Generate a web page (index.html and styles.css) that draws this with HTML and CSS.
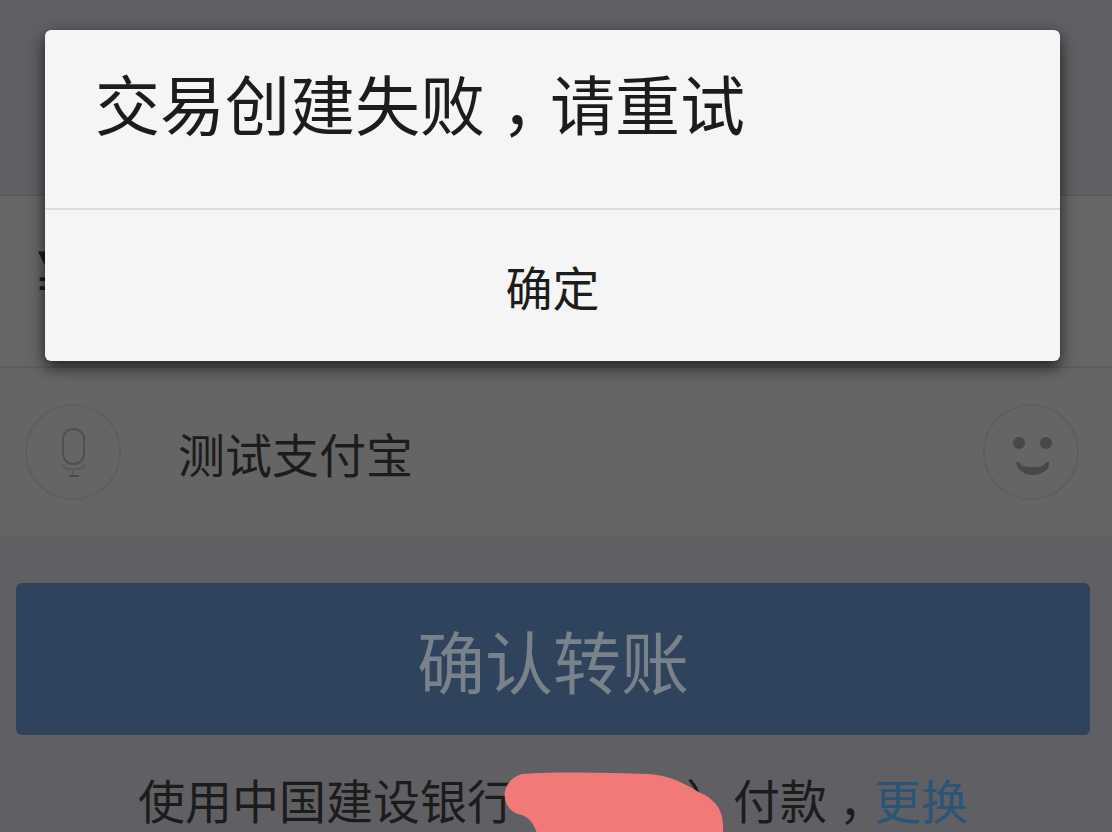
FILE: index.html
```html
<!DOCTYPE html>
<html lang="zh-CN">
<head>
  <meta charset="UTF-8">
  <meta name="viewport" content="width=device-width, initial-scale=1">
  <title>确认转账</title>
  <link rel="stylesheet" href="styles.css">
</head>
<body>
  <main class="page">
    <div class="payee"></div>

    <div class="amount">¥</div>

    <div class="remark">
      <button class="icon-btn" type="button" aria-label="语音">
        <svg width="98" height="98" viewBox="0 0 98 98" fill="none">
          <circle cx="49" cy="49" r="47" stroke="#5e5e5e" stroke-width="2"/>
          <rect x="39" y="26" width="21" height="35" rx="10" stroke="#505050" stroke-width="2"/>
          <path d="M38 62c4 6 19 6 23 0M49 67v5" stroke="#585858" stroke-width="2"/>
          <path d="M45 73h10" stroke="#484848" stroke-width="2"/>
        </svg>
      </button>
      <input class="remark-input" type="text" value="测试支付宝" aria-label="备注">
      <button class="icon-btn" type="button" aria-label="表情">
        <svg width="98" height="98" viewBox="0 0 98 98" fill="none">
          <circle cx="49" cy="49" r="47" stroke="#5e5e5e" stroke-width="2"/>
          <circle cx="37" cy="40" r="6" fill="#484848"/>
          <circle cx="64" cy="40" r="6" fill="#484848"/>
          <path d="M34 59q3-1 5 3c6 3 18 3 23 0q2-4 5-3c0 7-3 9-6 10-3 4-17 4-20 0-4-2-6-5-7-10z" fill="#484848"/>
        </svg>
      </button>
    </div>

    <div class="actions">
      <button class="confirm" type="button">确认转账</button>
      <p class="method">使用中国建设银行<span class="card-no"><svg class="scribble" width="222" height="90" viewBox="0 0 222 90"><path d="M20 3C60 0 110 2 147 3C174 5 188 17 203 24C216 32 222 42 221 60V90H80C60 84 44 76 35 62C30 48 24 45 16 43C-2 37-3 10 20 3z" fill="#f17977"/></svg></span>）付款<span class="comma">，</span><a href="#">更换</a></p>
    </div>
  </main>

  <div class="dialog" role="alertdialog" aria-labelledby="dialog-msg">
    <p class="dialog-msg" id="dialog-msg">交易创建失败<span class="comma">，</span>请重试</p>
    <button class="dialog-ok" type="button">确定</button>
  </div>
</body>
</html>
```

FILE: styles.css
```css
* {
  box-sizing: border-box;
}

body {
  margin: 0;
  min-height: 100vh;
  background-color: #605f63;
  color: #1c1c1c;
  font-family: "Noto Sans CJK SC", sans-serif;
  font-size: 47px;
  overflow: hidden;
}

p {
  margin: 0;
}

button,
input {
  border: 0;
  padding: 0;
  background: none;
  color: inherit;
  font-family: inherit;
  font-size: inherit;
}

/* full-width comma, centred in its cell */
.comma {
  display: inline-block;
  width: 1em;
  text-align: center;
  font-feature-settings: "halt";
}

.payee {
  height: 196px;
  border-bottom: 2px solid #5a5a5c;
}

.amount {
  height: 172px;
  padding: 0 36px;
  background-color: #666;
  border-bottom: 2px solid #5c5c5c;
  font-size: 72px;
  line-height: 152px;
}

.remark {
  display: flex;
  align-items: center;
  gap: 56px;
  height: 168px;
  padding: 0 32px 0 24px;
  background-color: #656565;
}

.icon-btn {
  display: flex;
  flex: none;
}

.remark-input {
  flex: 1;
  min-width: 0;
  height: 96px;
  outline: none;
}

.actions {
  padding: 47px 22px 0 16px;
}

.confirm {
  display: block;
  width: 100%;
  height: 152px;
  border-radius: 6px;
  background-color: #2f435d;
  color: #79818b;
  font-size: 68px;
}

.method {
  margin-top: 32px;
  line-height: 64px;
  text-align: center;
  white-space: nowrap;
}

.method a {
  color: #2b5577;
  text-decoration: none;
}

.card-no {
  display: inline-block;
  position: relative;
  width: 172px;
}

/* hand-drawn mark over the card number */
.scribble {
  position: absolute;
  left: -12px;
  top: -48px;
}

.dialog {
  position: absolute;
  top: 30px;
  left: 45px;
  right: 52px;
  border-radius: 6px;
  background-color: #f5f5f5;
  box-shadow: 0 6px 16px 0 rgba(0, 0, 0, 0.7);
}

.dialog-msg {
  padding: 24px 50px 58px;
  border-bottom: 2px solid #dcdcdc;
  font-size: 65px;
  line-height: 96px;
}

.dialog-ok {
  display: block;
  width: 100%;
  height: 151px;
}
```
